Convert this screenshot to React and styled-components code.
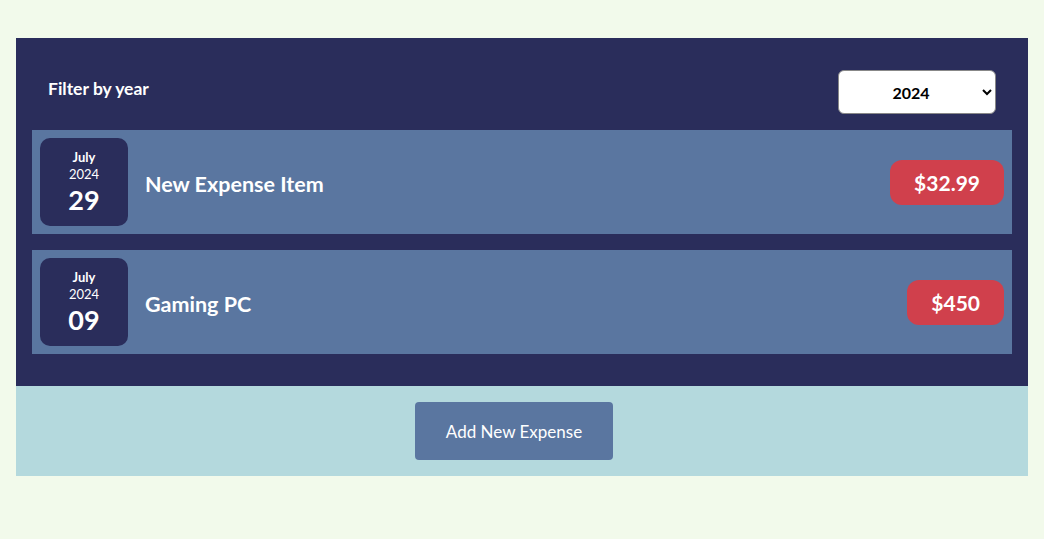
import styled, { createGlobalStyle } from "styled-components";

const GlobalStyle = createGlobalStyle`
  body {
    margin: 0;
    background: #f2faeb;
    font-family: "Source Sans Pro", Lato, "Liberation Sans", sans-serif;
  }
`;

const expenses = [
  { id: 1, title: "New Expense Item", month: "July", year: "2024", day: "29", amount: "$32.99" },
  { id: 2, title: "Gaming PC", month: "July", year: "2024", day: "09", amount: "$450" },
];

function App() {
  return (
    <>
      <GlobalStyle />
      <Page>
        <Expenses>
          <FilterBar>
            <FilterLabel>Filter by year</FilterLabel>
            <YearSelect defaultValue="2024">
              <option value="2024">2024</option>
              <option value="2023">2023</option>
              <option value="2022">2022</option>
            </YearSelect>
          </FilterBar>
          <List>
            {expenses.map((e) => (
              <Item key={e.id}>
                <DateBox>
                  <Month>{e.month}</Month>
                  <Year>{e.year}</Year>
                  <Day>{e.day}</Day>
                </DateBox>
                <Title>{e.title}</Title>
                <Price>{e.amount}</Price>
              </Item>
            ))}
          </List>
        </Expenses>
        <Footer>
          <AddButton>Add New Expense</AddButton>
        </Footer>
      </Page>
    </>
  );
}

export default App;

const Page = styled.div`
  padding: 38px 16px 0;
`;

const Expenses = styled.section`
  background: #2a2d5b;
  padding: 32px 16px;
`;

const FilterBar = styled.div`
  display: flex;
  align-items: center;
  justify-content: space-between;
  padding: 0 16px;
  margin-bottom: 16px;
`;

const FilterLabel = styled.label`
  color: #fff;
  font-weight: 700;
  font-size: 17.5px;
  margin-bottom: 7px;
`;

const YearSelect = styled.select`
  width: 158px;
  height: 44px;
  border-radius: 6px;
  border: 1px solid #888;
  background: #fff;
  font-family: inherit;
  font-weight: 700;
  font-size: 16px;
  text-align: center;
  text-align-last: center;
  color: #000;
`;

const List = styled.ul`
  list-style: none;
  margin: 0;
  padding: 0;
  display: flex;
  flex-direction: column;
  gap: 16px;
`;

const Item = styled.li`
  display: flex;
  align-items: center;
  height: 104px;
  padding: 0 8px;
  background: #5a76a0;
  box-sizing: border-box;
`;

const DateBox = styled.div`
  width: 88px;
  height: 88px;
  padding-top: 2px;
  box-sizing: border-box;
  border-radius: 10px;
  background: #2a2d5b;
  color: #fff;
  display: flex;
  flex-direction: column;
  align-items: center;
  justify-content: center;
  flex-shrink: 0;
`;

const Month = styled.div`
  font-size: 13px;
  font-weight: 700;
  line-height: 17px;
`;

const Year = styled.div`
  font-size: 13px;
  line-height: 17px;
`;

const Day = styled.div`
  font-size: 27px;
  font-weight: 700;
  line-height: 34px;
`;

const Title = styled.h2`
  flex: 1;
  margin: 4px 0 0 17px;
  color: #fff;
  font-size: 21.5px;
  font-weight: 700;
`;

const Price = styled.div`
  background: #d0404c;
  color: #fff;
  font-size: 21px;
  font-weight: 700;
  height: 45px;
  padding: 0 24px;
  border-radius: 12px;
  display: flex;
  align-items: center;
`;

const Footer = styled.div`
  background: #b4d9dd;
  height: 90px;
  display: flex;
  justify-content: center;
  align-items: center;
`;

const AddButton = styled.button`
  width: 198px;
  height: 58px;
  margin-right: 16px;
  border: none;
  border-radius: 4px;
  background: #5a76a0;
  color: #fff;
  font-family: inherit;
  font-size: 17px;
`;
